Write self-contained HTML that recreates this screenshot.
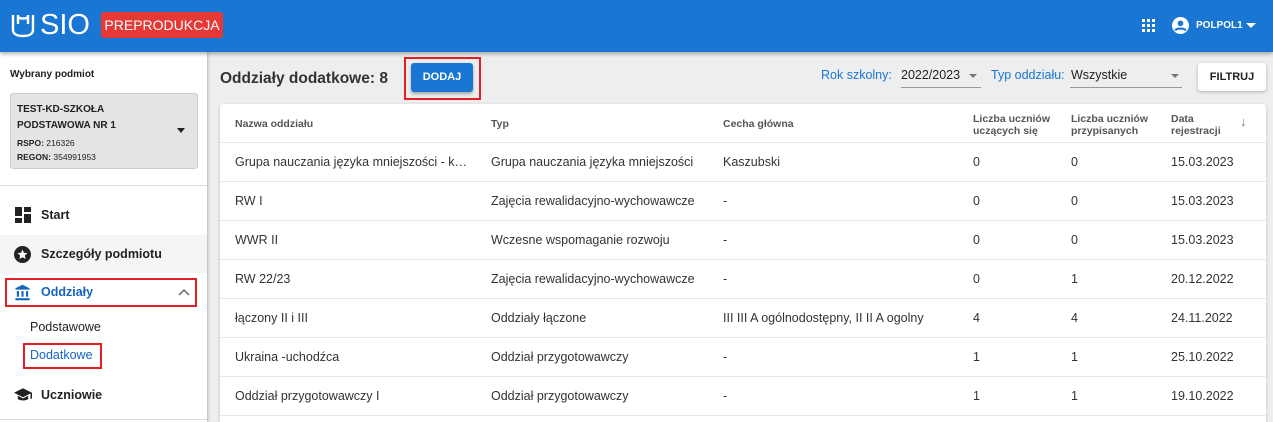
<!DOCTYPE html>
<html><head><meta charset="utf-8"><style>
*{box-sizing:border-box;margin:0;padding:0}
html,body{width:1273px;height:422px;overflow:hidden}
body{font-family:"Liberation Sans",sans-serif;background:#eeeeee;position:relative;color:#333}
.abs{position:absolute}
#hdr{left:0;top:0;width:1273px;height:52px;background:#1976d2;box-shadow:0 2px 4px rgba(0,0,0,.3);z-index:3}
#side{left:0;top:52px;width:207px;height:370px;background:#fff;box-shadow:1px 0 3px rgba(0,0,0,.25);z-index:2}
.nav{position:absolute;left:0;width:207px;height:38px;font-size:12.5px;font-weight:bold;color:#222;display:flex;align-items:center}
.nav span{position:absolute;left:41px}
.red{position:absolute;border:2px solid #e31e24}
#card{left:220px;top:104px;width:1046px;height:318px;background:#fff;box-shadow:0 1px 3px rgba(0,0,0,.2);border-radius:3px 3px 0 0;overflow:hidden}
.row{position:absolute;left:0;width:1046px;height:39px;border-top:1px solid #e8e8e8;font-size:12.5px;color:#333}
.row div{position:absolute;top:12px;white-space:nowrap}
.th{position:absolute;font-size:10.5px;font-weight:bold;color:#555;line-height:12px}
</style></head><body>
<div id="hdr" class="abs">
  <svg class="abs" style="left:10px;top:12px" width="26" height="26" viewBox="0 0 26 26"><path d="M3 3v15c0 4 4 6 10 6s10-2 10-6V3M8 3v9M18 3v9M8 5c2 2 8 2 10 0" stroke="#fff" stroke-width="2.4" fill="none"/></svg>
  <div class="abs" style="left:40px;top:9px;font-size:29px;color:#fff">SIO</div>
  <div class="abs" style="left:101px;top:12px;width:122px;height:26px;background:#e53935;border-radius:3px;color:#fff;font-size:14px;line-height:26px;text-align:center;white-space:nowrap">PREPRODUKCJA</div>
  <svg class="abs" style="left:1142px;top:19px" width="13" height="13" viewBox="0 0 13 13" fill="#fff"><rect x="0" y="0" width="3" height="3"/><rect x="5" y="0" width="3" height="3"/><rect x="10" y="0" width="3" height="3"/><rect x="0" y="5" width="3" height="3"/><rect x="5" y="5" width="3" height="3"/><rect x="10" y="5" width="3" height="3"/><rect x="0" y="10" width="3" height="3"/><rect x="5" y="10" width="3" height="3"/><rect x="10" y="10" width="3" height="3"/></svg>
  <svg class="abs" style="left:1172px;top:17px" width="17" height="17" viewBox="0 0 24 24"><circle cx="12" cy="12" r="12" fill="#fff"/><circle cx="12" cy="9" r="4" fill="#1976d2"/><path d="M4.5 19c2-3.5 13-3.5 15 0" stroke="#1976d2" stroke-width="3" fill="none"/></svg>
  <div class="abs" style="left:1196px;top:20px;font-size:10px;font-weight:bold;color:#fff">POLPOL1</div>
  <div class="abs" style="left:1246px;top:23px;border:5px solid transparent;border-top-color:#fff"></div>
</div>
<div id="side" class="abs">
  <div class="abs" style="left:10px;top:17px;font-size:10px;font-weight:bold;color:#222">Wybrany podmiot</div>
  <div class="abs" style="left:10px;top:41px;width:188px;height:76px;background:#e4e4e4;border:1px solid #ccc;border-radius:3px">
    <div class="abs" style="left:6px;top:8px;font-size:10px;font-weight:bold;line-height:16px;color:#222">TEST-KD-SZKOŁA<br>PODSTAWOWA NR 1</div>
    <div class="abs" style="left:6px;top:42px;font-size:8.5px;line-height:14px;color:#222"><b>RSPO:</b> 216326<br><b>REGON:</b> 354991953</div>
    <div class="abs" style="left:166px;top:34px;border:4px solid transparent;border-top:5px solid #222"></div>
  </div>
  <div class="abs" style="left:0;top:133px;width:207px;height:1px;background:#ddd"></div>
  <div class="nav" style="top:144px"><svg class="abs" style="left:15px" width="16" height="16" viewBox="0 0 16 16" fill="#222"><rect x="0" y="0" width="7" height="9"/><rect x="9" y="0" width="7" height="5"/><rect x="0" y="11" width="7" height="5"/><rect x="9" y="7" width="7" height="9"/></svg><span>Start</span></div>
  <div class="nav" style="top:183px;background:#f5f5f5"><svg class="abs" style="left:14px" width="17" height="17" viewBox="0 0 24 24"><circle cx="12" cy="12" r="12" fill="#222"/><path d="M12 5l2 4.5 5 .5-3.7 3.3 1 5L12 15.8 7.7 18.3l1-5L5 10l5-.5z" fill="#fff"/></svg><span>Szczegóły podmiotu</span></div>
  <div class="nav" style="top:221px;color:#1565c0"><svg class="abs" style="left:14px" width="17" height="17" viewBox="0 0 24 24" fill="#1565c0"><path d="M12 1L2 6v2h20V6z"/><rect x="4" y="10" width="3" height="8"/><rect x="10.5" y="10" width="3" height="8"/><rect x="17" y="10" width="3" height="8"/><rect x="2" y="20" width="20" height="3"/></svg><span>Oddziały</span><svg class="abs" style="left:178px" width="12" height="8" viewBox="0 0 12 8"><path d="M1 7l5-5 5 5" stroke="#666" stroke-width="1.5" fill="none"/></svg></div>
  <div class="red" style="left:5px;top:226px;width:192px;height:29px"></div>
  <div class="abs" style="left:30px;top:268px;font-size:12.5px;color:#222">Podstawowe</div>
  <div class="abs" style="left:30px;top:296px;font-size:12.5px;color:#1565c0">Dodatkowe</div>
  <div class="red" style="left:23px;top:291px;width:79px;height:26px"></div>
  <div class="nav" style="top:324px"><svg class="abs" style="left:14px" width="18" height="14" viewBox="0 0 24 18" fill="#222"><path d="M12 0L0 6l12 6 10-5v7h2V6z"/><path d="M5 10v4c2 3 12 3 14 0v-4l-7 3.5z"/></svg><span>Uczniowie</span></div>
  <div class="abs" style="left:0;top:367px;width:207px;height:1px;background:#ddd"></div>
</div>
<div class="abs" style="left:220px;top:70px;font-size:15.5px;font-weight:bold;color:#333">Oddziały dodatkowe: 8</div>
<div class="red" style="left:404px;top:57px;width:77px;height:43px"></div>
<div class="abs" style="left:411px;top:63px;width:62px;height:29px;background:#1976d2;border-radius:3px;box-shadow:0 2px 3px rgba(0,0,0,.3);color:#fff;font-size:11px;font-weight:bold;line-height:29px;text-align:center">DODAJ</div>
<div class="abs" style="left:821px;top:68px;font-size:12.5px;color:#1976d2">Rok szkolny:</div>
<div class="abs" style="left:901px;top:68px;font-size:12.5px;color:#222">2022/2023</div>
<div class="abs" style="left:969px;top:74px;border:4px solid transparent;border-top:4px solid #777"></div>
<div class="abs" style="left:901px;top:87px;width:80px;height:1px;background:#999"></div>
<div class="abs" style="left:991px;top:68px;font-size:12.5px;color:#1976d2">Typ oddziału:</div>
<div class="abs" style="left:1071px;top:68px;font-size:12.5px;color:#222">Wszystkie</div>
<div class="abs" style="left:1171px;top:74px;border:4px solid transparent;border-top:4px solid #777"></div>
<div class="abs" style="left:1070px;top:87px;width:112px;height:1px;background:#999"></div>
<div class="abs" style="left:1198px;top:63px;width:68px;height:28px;background:#fff;border-radius:3px;box-shadow:0 1px 3px rgba(0,0,0,.25);font-size:11px;font-weight:bold;line-height:28px;text-align:center;color:#222">FILTRUJ</div>
<div id="card" class="abs">
  <div class="th" style="left:15px;top:14px">Nazwa oddziału</div>
  <div class="th" style="left:271px;top:14px">Typ</div>
  <div class="th" style="left:503px;top:14px">Cecha główna</div>
  <div class="th" style="left:753px;top:9px">Liczba uczniów<br>uczących się</div>
  <div class="th" style="left:851px;top:9px">Liczba uczniów<br>przypisanych</div>
  <div class="th" style="left:951px;top:9px">Data<br>rejestracji</div>
  <div class="th" style="left:1020px;top:12px;font-size:13px;font-weight:normal;color:#777">↓</div>
  <div class="row" style="top:38px"><div style="left:15px;width:238px;overflow:hidden;text-overflow:ellipsis">Grupa nauczania języka mniejszości - kaszubski</div><div style="left:271px">Grupa nauczania języka mniejszości</div><div style="left:503px">Kaszubski</div><div style="left:753px">0</div><div style="left:851px">0</div><div style="left:951px">15.03.2023</div></div>
  <div class="row" style="top:77px"><div style="left:15px">RW I</div><div style="left:271px">Zajęcia rewalidacyjno-wychowawcze</div><div style="left:503px">-</div><div style="left:753px">0</div><div style="left:851px">0</div><div style="left:951px">15.03.2023</div></div>
  <div class="row" style="top:116px"><div style="left:15px">WWR II</div><div style="left:271px">Wczesne wspomaganie rozwoju</div><div style="left:503px">-</div><div style="left:753px">0</div><div style="left:851px">0</div><div style="left:951px">15.03.2023</div></div>
  <div class="row" style="top:155px"><div style="left:15px">RW 22/23</div><div style="left:271px">Zajęcia rewalidacyjno-wychowawcze</div><div style="left:503px">-</div><div style="left:753px">0</div><div style="left:851px">1</div><div style="left:951px">20.12.2022</div></div>
  <div class="row" style="top:194px"><div style="left:15px">łączony II i III</div><div style="left:271px">Oddziały łączone</div><div style="left:503px">III III A ogólnodostępny, II II A ogolny</div><div style="left:753px">4</div><div style="left:851px">4</div><div style="left:951px">24.11.2022</div></div>
  <div class="row" style="top:233px"><div style="left:15px">Ukraina -uchodźca</div><div style="left:271px">Oddział przygotowawczy</div><div style="left:503px">-</div><div style="left:753px">1</div><div style="left:851px">1</div><div style="left:951px">25.10.2022</div></div>
  <div class="row" style="top:272px"><div style="left:15px">Oddział przygotowawczy I</div><div style="left:271px">Oddział przygotowawczy</div><div style="left:503px">-</div><div style="left:753px">1</div><div style="left:851px">1</div><div style="left:951px">19.10.2022</div></div>
  <div class="row" style="top:311px"></div>
</div>
</body></html>
